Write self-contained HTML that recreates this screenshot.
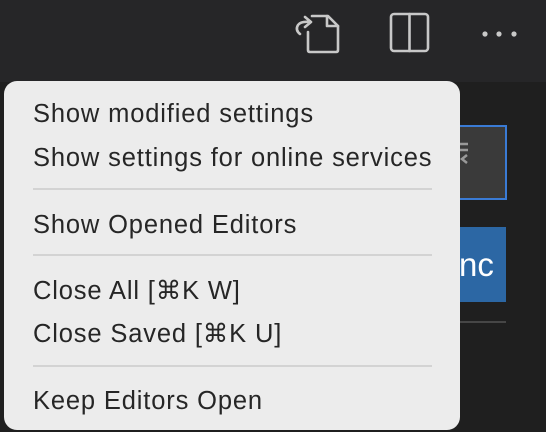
<!DOCTYPE html>
<html><head><style>
body{margin:0;width:546px;height:432px;background:#1f1f1f;position:relative;overflow:hidden;font-family:"Liberation Sans",Helvetica,Arial,sans-serif}
.top{position:absolute;left:0;top:0;width:546px;height:82px;background:#262628}
.menu{position:absolute;left:4px;top:81px;width:456px;height:349px;background:#ececec;border-radius:13px;}
.it{position:absolute;left:29px;font-size:25.5px;letter-spacing:0.85px;color:#262626;line-height:28px;white-space:nowrap}
.sep{position:absolute;left:29px;width:399px;height:2px;background:#d3d3d3}
</style></head><body>
<div class="top"></div>
<svg style="position:absolute;left:0;top:0" width="546" height="82">
<g fill="none" stroke="#c8c8c8" stroke-width="2.6" stroke-linejoin="round" stroke-linecap="round">
<path d="M308 32 V50 Q308 52 310 52 H336 Q338 52 338 50 V26 L328 16 H312"/>
<path d="M327 16 V26 H338"/>
<path d="M300 34 Q295 30 298 25 Q301 21 310 22 M305 17 L311 22 L305 27"/>
<rect x="391" y="14" width="37" height="37" rx="3"/>
<path d="M409.5 14 V51"/>
</g>
<g fill="#c8c8c8"><circle cx="485" cy="34" r="2.6"/><circle cx="499" cy="34" r="2.6"/><circle cx="514" cy="34" r="2.6"/></g>
<rect x="0" y="126" width="4" height="70" fill="#3a7bd5"/>
</svg>
<div style="position:absolute;left:455px;top:125px;width:48px;height:71px;background:#3a3a3a;border:2px solid #3a7bd5"></div>
<svg style="position:absolute;left:455px;top:140px" width="20" height="30"><g stroke="#999" stroke-width="2.5" fill="none"><path d="M5 4 H13 M5 10 H13 M12 15 L7 19 L12 23"/></g></svg>
<div style="position:absolute;left:455px;top:227px;width:51px;height:75px;background:#2c67a4"></div>
<div style="position:absolute;left:459px;top:246px;color:#fff;font-size:33px">nc</div>
<div style="position:absolute;left:455px;top:321px;width:51px;height:2px;background:#464646"></div>
<div class="menu">
<div class="it" style="top:19px">Show modified settings</div>
<div class="it" style="top:63px">Show settings for online services</div>
<div class="sep" style="top:107px"></div>
<div class="it" style="top:130px">Show Opened Editors</div>
<div class="sep" style="top:173px"></div>
<div class="it" style="top:196px">Close All [⌘K W]</div>
<div class="it" style="top:239px">Close Saved [⌘K U]</div>
<div class="sep" style="top:284px"></div>
<div class="it" style="top:306px">Keep Editors Open</div>
</div>
</body></html>
